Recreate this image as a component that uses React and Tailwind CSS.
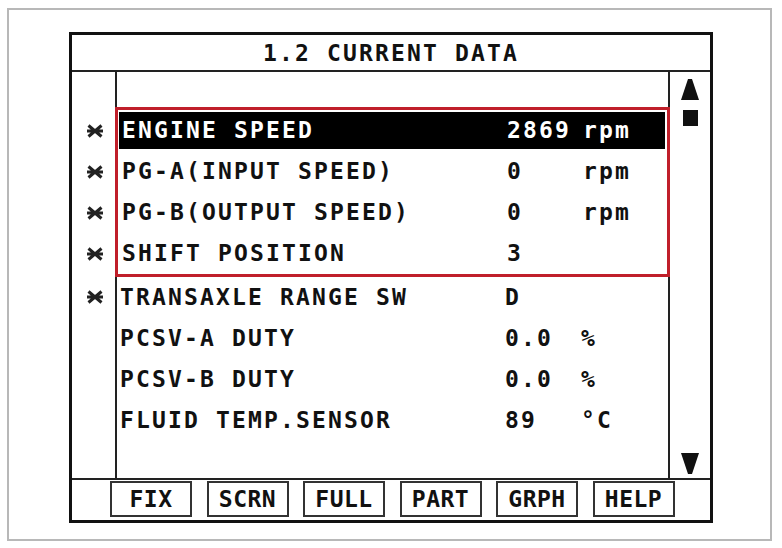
const rows = [
  { mark: true, label: 'ENGINE SPEED', value: '2869', unit: 'rpm', active: true },
  { mark: true, label: 'PG-A(INPUT SPEED)', value: '0', unit: 'rpm' },
  { mark: true, label: 'PG-B(OUTPUT SPEED)', value: '0', unit: 'rpm' },
  { mark: true, label: 'SHIFT POSITION', value: '3', unit: '' },
];

const rest = [
  { label: 'TRANSAXLE RANGE SW', value: 'D', unit: '' },
  { label: 'PCSV-A DUTY', value: '0.0', unit: '%' },
  { label: 'PCSV-B DUTY', value: '0.0', unit: '%' },
  { label: 'FLUID TEMP.SENSOR', value: '89', unit: '°C' },
];

const buttons = ['FIX', 'SCRN', 'FULL', 'PART', 'GRPH', 'HELP'];

function Mark() {
  return (
    <svg width="18" height="14" viewBox="0 0 18 14" className="text-[#222]">
      <path d="M2.5 1.5 L15.5 12.5 M2.5 12.5 L15.5 1.5 M1 7 H17" stroke="currentColor" strokeWidth="3" fill="none" />
    </svg>
  );
}

function Row({ row }) {
  return (
    <div className="h-[41px] flex items-center">
      <div
        className={`h-[37px] flex-1 grid grid-cols-[385px_76px_1fr] items-center pl-[3px] ${
          row.active ? 'bg-black text-white mr-[2px]' : 'text-[#111]'
        }`}
      >
        <span className="whitespace-pre">{row.label}</span>
        <span>{row.value}</span>
        <span>{row.unit}</span>
      </div>
    </div>
  );
}

export default function App() {
  return (
    <div className="w-[782px] h-[548px] bg-white pt-[8px] pl-[7px] pr-[10px] pb-[7px] font-['DejaVu_Sans_Mono',monospace] font-bold text-[23px] tracking-[2.15px] leading-none">
      <div className="h-full border-2 border-[#b8b8b8] pt-[22px] pl-[60px]">
        <div className="w-[644px] h-[491px] border-[3px] border-[#111] flex flex-col">
          <div className="h-[37px] border-b-2 border-[#222] flex items-center justify-center pt-[2px] text-[#111]">
            1.2 CURRENT DATA
          </div>

          <div className="h-[408px] border-b-2 border-[#222] flex">
            <div className="w-[43px] pt-[38px] flex flex-col items-center">
              {rows.map((r, i) => (
                <div key={i} className="h-[41px] flex items-center pl-[2px]">
                  <Mark />
                </div>
              ))}
              <div className="h-[41px] mt-[2px] flex items-center pl-[2px]">
                <Mark />
              </div>
            </div>

            <div className="w-[555px] border-x-2 border-[#222]">
              <div className="h-[35px]" />
              <div className="-mx-[2px] border-[3px] border-[#c01f2a] pl-[1px]">
                {rows.map((r, i) => (
                  <Row key={i} row={r} />
                ))}
              </div>
              {rest.map((r, i) => (
                <Row key={i} row={r} />
              ))}
            </div>

            <div className="flex-1 flex flex-col items-center pt-[7px] pb-[4px] text-[#111]">
              <svg width="18" height="21" viewBox="0 0 18 21">
                <path d="M7 0 H11 L18 21 H0 Z" fill="currentColor" />
              </svg>
              <div className="w-[15px] h-[16px] bg-[#111] mt-[10px]" />
              <div className="flex-1" />
              <svg width="18" height="21" viewBox="0 0 18 21">
                <path d="M0 0 H18 L11 21 H7 Z" fill="currentColor" />
              </svg>
            </div>
          </div>

          <div className="flex-1 flex items-start pl-[38px] pt-[1px] gap-[14.5px]">
            {buttons.map((b) => (
              <div
                key={b}
                className="w-[82px] h-[36px] border-2 border-[#333] flex items-center justify-center text-[#111] tracking-[0.5px]"
              >
                {b}
              </div>
            ))}
          </div>
        </div>
      </div>
    </div>
  );
}
